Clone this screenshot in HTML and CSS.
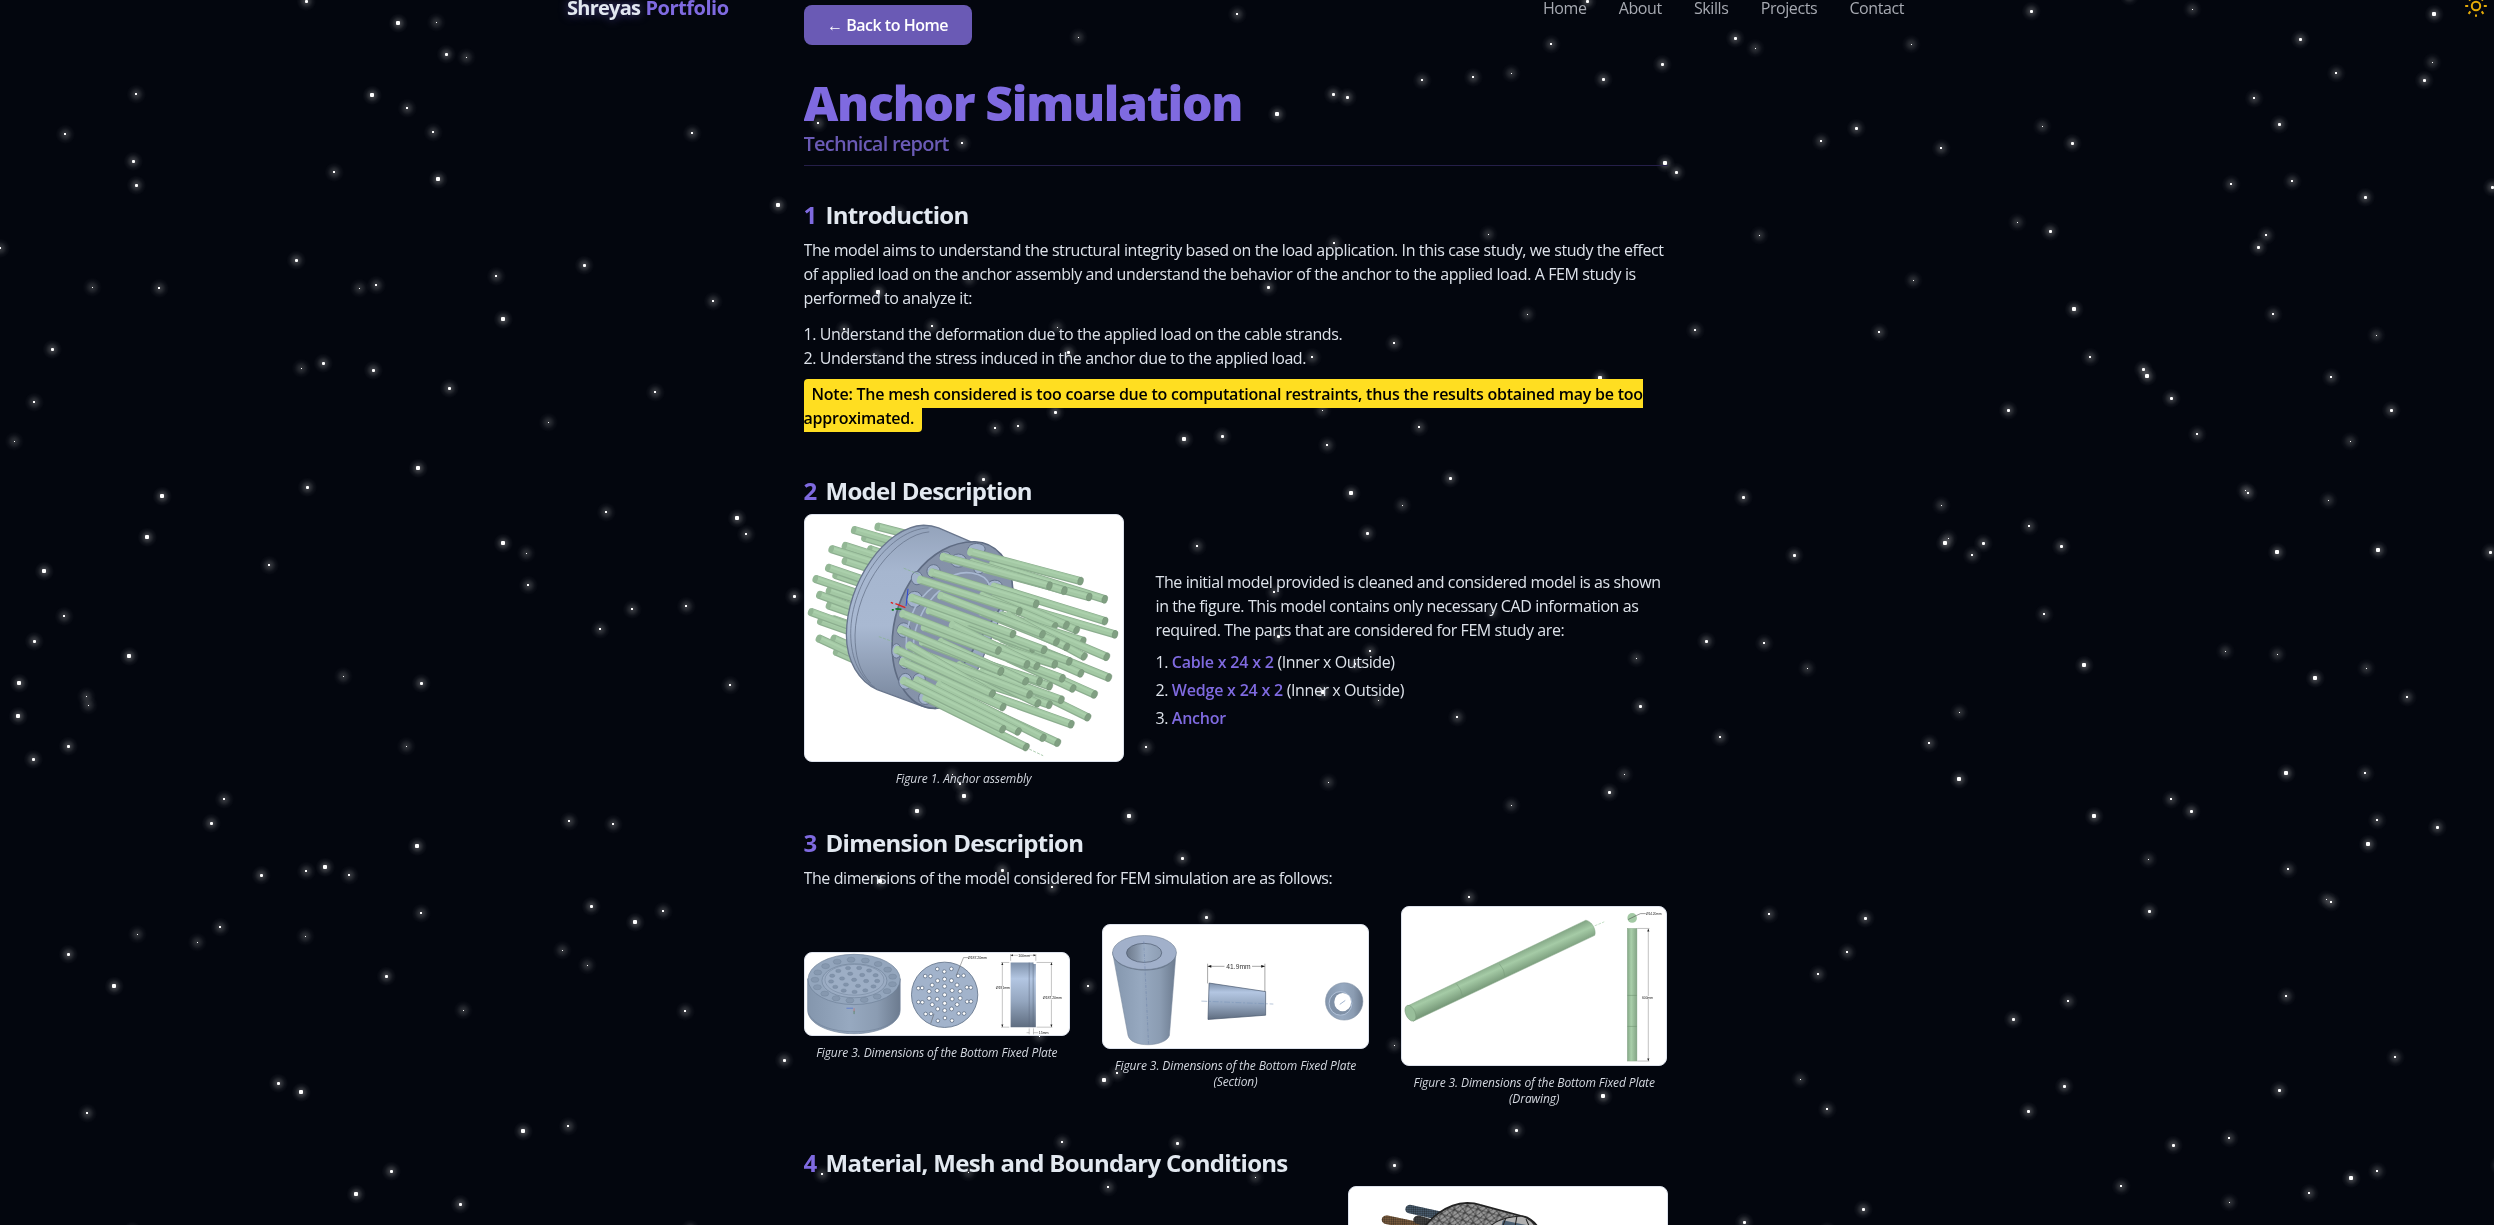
FILE: index.html
```html
<!DOCTYPE html>
<html lang="en">
<head>
<meta charset="utf-8">
<title>Anchor Simulation | Shreyas Portfolio</title>
<link rel="stylesheet" href="styles.css">
</head>
<body>
<svg class="stars" id="stars" aria-hidden="true">
  <defs>
    <radialGradient id="glow">
      <stop offset="0" stop-color="#fff" stop-opacity=".3"/>
      <stop offset=".3" stop-color="#fff" stop-opacity=".2"/>
      <stop offset=".65" stop-color="#fff" stop-opacity=".06"/>
      <stop offset="1" stop-color="#fff" stop-opacity="0"/>
    </radialGradient>
  </defs>
</svg>

<header class="site-header">
  <div class="header-inner">
    <a class="logo"><span class="logo-first">Shreyas</span> <span class="logo-last">Portfolio</span></a>
    <nav class="nav"><a>Home</a><a>About</a><a>Skills</a><a>Projects</a><a>Contact</a></nav>
  </div>
  <svg class="sun" viewBox="0 0 24 24"><circle cx="12" cy="12" r="4.2"/><path d="M12 1.2v2.4M12 20.4v2.4M1.2 12h3M19.8 12h3M4.6 4.6l1.7 2M17.7 17.4l1.7 2.4M4.6 19.8l1.7-2.4M19.4 4.6l-1.7 2"/></svg>
</header>

<main class="report">
  <a class="back">← Back to Home</a>
  <div class="title-block">
    <h1>Anchor Simulation</h1>
    <p class="subtitle">Technical report</p>
  </div>

  <section>
    <h2><span>1</span>Introduction</h2>
    <p>The model aims to understand the structural integrity based on the load application. In this case study, we study the effect<br>of applied load on the anchor assembly and understand the behavior of the anchor to the applied load. A FEM study is<br>performed to analyze it:</p>
    <p class="steps">1. Understand the deformation due to the applied load on the cable strands.<br>2. Understand the stress induced in the anchor due to the applied load.</p>
    <p class="note"><mark>Note: The mesh considered is too coarse due to computational restraints, thus the results obtained may be too<br>approximated.</mark></p>
  </section>

  <section class="model">
    <h2><span>2</span>Model Description</h2>
    <div class="split">
      <figure class="fig-main">
        <svg class="pic assembly" viewBox="27 27 960 744" preserveAspectRatio="none">
          <defs>
            <linearGradient id="ringOuter" x1="0" y1="0" x2="0" y2="1"><stop offset="0" stop-color="#94a3bb"/><stop offset=".25" stop-color="#a6b6cf"/><stop offset=".55" stop-color="#a9b9d2"/><stop offset="1" stop-color="#76849a"/></linearGradient>
            <linearGradient id="ringInner" x1="0" y1="0" x2="1" y2="1"><stop offset="0" stop-color="#8490a7"/><stop offset="1" stop-color="#8795ac"/></linearGradient>
          </defs>
          <g id="rodsBack"></g>
          <path d="M385 58C270 62 152 230 152 390C152 470 190 530 245 555L380 605C430 622 470 610 520 560L654 250C650 200 610 145 560 122L430 66Q410 58 385 58Z" fill="url(#ringOuter)" stroke="#68758c" stroke-width="4"/>
          <path d="M400 66C285 70 165 230 165 385C165 465 195 520 238 548M402 78C300 86 180 240 178 390C178 450 190 500 225 535" fill="none" stroke="#6b788f" stroke-width="2.5"/>
          <path d="M540 108C400 106 288 260 290 425C291 540 350 612 420 612L654 250C652 160 600 110 540 108Z" fill="url(#ringInner)" stroke="#5f6c83" stroke-width="5"/>
          <g fill="#a3b3cc" stroke="#65728a" stroke-width="3">
            <ellipse cx="545" cy="130" rx="26" ry="17"/><ellipse cx="490" cy="165" rx="24" ry="20"/><ellipse cx="450" cy="150" rx="16" ry="12"/><ellipse cx="415" cy="197" rx="20" ry="20"/><ellipse cx="365" cy="218" rx="17" ry="20"/><ellipse cx="358" cy="282" rx="24" ry="24"/><ellipse cx="325" cy="375" rx="20" ry="22"/><ellipse cx="303" cy="438" rx="14" ry="22"/><ellipse cx="330" cy="470" rx="19" ry="22"/><ellipse cx="330" cy="530" rx="20" ry="24"/><ellipse cx="390" cy="580" rx="20" ry="20"/><ellipse cx="372" cy="522" rx="18" ry="16"/><ellipse cx="600" cy="240" rx="22" ry="16"/><ellipse cx="552" cy="190" rx="15" ry="15"/>
          </g>
          <path d="M420 240C350 290 322 370 336 460M440 250C380 300 345 380 356 455M450 225C500 185 570 200 585 240" fill="none" stroke="#a9b9d2" stroke-width="5"/>
          <g id="rodsFront"></g>
          <path d="M325 188l45 18M250 395l40 14M704 735l42 20" stroke="#85b58a" stroke-width="2" stroke-dasharray="9 4"/>
          <path d="M330 307l-30-12M286 291l7 3" stroke="#e02020" stroke-width="4"/><path d="M338 250l-6 52" stroke="#2946d8" stroke-width="3"/><path d="M289 314h6M300 311l18 1" stroke="#0c7d22" stroke-width="5"/>
        </svg>
        <figcaption>Figure 1. Anchor assembly</figcaption>
      </figure>
      <div class="split-text">
        <p>The initial model provided is cleaned and considered model is as shown<br>in the figure. This model contains only necessary CAD information as<br>required. The parts that are considered for FEM study are:</p>
        <ul>
          <li>1. <b>Cable x 24 x 2</b> (Inner x Outside)</li>
          <li>2. <b>Wedge x 24 x 2</b> (Inner x Outside)</li>
          <li>3. <b>Anchor</b></li>
        </ul>
      </div>
    </div>
  </section>

  <section class="dims">
    <h2><span>3</span>Dimension Description</h2>
    <p>The dimensions of the model considered for FEM simulation are as follows:</p>
    <div class="trio">
      <figure>
        <svg class="pic plate" viewBox="12 21 798 251" preserveAspectRatio="none">
          <defs>
            <linearGradient id="steelH"><stop offset="0" stop-color="#8496ad"/><stop offset=".45" stop-color="#97a9c0"/><stop offset=".75" stop-color="#8b9cb2"/><stop offset="1" stop-color="#6c7b8f"/></linearGradient>
            <linearGradient id="steelV" x1="0" y1="0" x2="0" y2="1"><stop offset="0" stop-color="#7f91aa"/><stop offset=".25" stop-color="#b3c6e2"/><stop offset=".6" stop-color="#94a6bf"/><stop offset="1" stop-color="#5f6d80"/></linearGradient>
            <linearGradient id="bore"><stop offset="0" stop-color="#6d7a8c"/><stop offset=".3" stop-color="#8796aa"/><stop offset=".5" stop-color="#9eafc6"/><stop offset="1" stop-color="#8d9db3"/></linearGradient>
          </defs>
          <path d="M20 100V195C20 240 90 268 160 268S299 240 299 195V100Z" fill="url(#steelH)" stroke="#74859b" stroke-width="2"/>
          <path d="M22 205C40 245 100 262 160 262S280 245 297 205" fill="none" stroke="#72839a" stroke-width="2"/>
          <ellipse cx="160" cy="102" rx="139" ry="77" fill="#94a6bd" stroke="#6e8097" stroke-width="2"/>
          <g id="drumNotches" fill="#8698af"></g>
          <ellipse cx="161" cy="106" rx="98" ry="52" fill="#9bacc3" stroke="#71839a" stroke-width="2"/>
          <ellipse cx="161" cy="103" rx="89" ry="47" fill="#9daec5" stroke="#71839a" stroke-width="1.5"/>
          <g id="drumHoles" fill="#8193ab"></g>
          <path d="M137 190h20" stroke="#4968cf" stroke-width="2"/><path d="M160 190v10" stroke="#c66" stroke-width="2"/><path d="M160 198v10" stroke="#487a50" stroke-width="2"/>
          <circle cx="433" cy="149" r="100" fill="#a2b3cb" stroke="#5f7087" stroke-width="2.5"/>
          <g id="discHoles" fill="#fff"></g>
          <path d="M468 90L490 35H503M391 237l10-30" fill="none" stroke="#555" stroke-width="1.5"/>
          <path d="M632 50H700V55H708V248H632Z" fill="url(#steelV)"/><path d="M700 50v198M688 50v198" stroke="#5b6b80" stroke-width="1.5"/>
          <path d="M632 45V24M708 45V24M632 28h76M628 50h-25M628 248h-25M607 50v198M710 50h48M710 248h48M755 50v198M688 252v18M701 252v18M680 265h8M701 265h14" fill="none" stroke="#777" stroke-width="1.3"/>
          <path fill="#222" d="M632 28l7-3v6zM708 28l-7-3v6zM607 50l-3 8h6zM607 248l-3-8h6zM755 50l-3 8h6zM755 248l-3-8h6z"/>
          <path d="M654 24h34v9h-34zM586 122h44v9h-44zM730 154h52v9h-52z" fill="#fff"/>
          <g class="dim-tiny"><text x="655" y="32">100mm</text><text x="587" y="131">Ø191mm</text><text x="729" y="163">Ø187.20mm</text><text x="503" y="39">Ø187.20mm</text><text x="717" y="269">15mm</text></g>
        </svg>
        <figcaption>Figure 3. Dimensions of the Bottom Fixed Plate</figcaption>
      </figure>
      <figure>
        <svg class="pic wedge" viewBox="20 72 721 375" preserveAspectRatio="none">
          <path d="M46 155L88 408C92 428 116 437 143 437S198 425 201 408L219 155Z" fill="url(#steelH)" stroke="#78889d" stroke-width="1.5"/>
          <path d="M46 160C50 192 90 211 133 211S216 195 219 155Z" fill="#6d7c91"/>
          <ellipse cx="133" cy="156" rx="87" ry="52" fill="#a1b0ca" stroke="#68778c" stroke-width="1.5"/>
          <ellipse cx="132" cy="157" rx="48" ry="29" fill="url(#bore)" stroke="#4e5c70" stroke-width="2"/>
          <path d="M131 122L144 434" stroke="#6c82a8" stroke-width="1.5" stroke-dasharray="9 4 2 4"/>
          <path d="M309 249L463 275V347L306 360Z" fill="url(#steelV)" stroke="#4b5a70" stroke-width="2"/>
          <path d="M305 190v60M461 190v85M305 198h46M426 198h35" stroke="#555" stroke-width="1.5"/><path d="M305 198l10-4v8zM461 198l-10-4v8z" fill="#111"/>
          <path d="M288 304L484 313" stroke="#7892b8" stroke-width="1.5" stroke-dasharray="16 5 5 5"/>
          <text x="356" y="205" class="dim" textLength="66" lengthAdjust="spacingAndGlyphs">41.9mm</text>
          <ellipse cx="677" cy="305" rx="51" ry="57" fill="url(#steelH)" stroke="#8190a5" stroke-width="1.5"/>
          <ellipse cx="667" cy="311" rx="31" ry="36" fill="#7f90a6" stroke="#b7c8df" stroke-width="2.5"/>
          <ellipse cx="673" cy="307" rx="23" ry="28" fill="#fff"/><path d="M665 314l15-12" stroke="#7892b8" stroke-width="2"/>
        </svg>
        <figcaption>Figure 3. Dimensions of the Bottom Fixed Plate (Section)</figcaption>
      </figure>
      <figure>
        <svg class="pic cable" viewBox="827 18 721 479" preserveAspectRatio="none">
          <defs>
            <linearGradient id="greenRod" gradientUnits="userSpaceOnUse" x1="1080" y1="185" x2="1105" y2="235"><stop offset="0" stop-color="#85a887"/><stop offset=".4" stop-color="#a5cba6"/><stop offset="1" stop-color="#799b7b"/></linearGradient>
            <linearGradient id="greenBar"><stop offset="0" stop-color="#85a887"/><stop offset=".4" stop-color="#a9cfaa"/><stop offset="1" stop-color="#84a586"/></linearGradient>
          </defs>
          <path d="M842 318L1328 58C1345 62 1357 88 1352 104L858 364Z" fill="url(#greenRod)" stroke="#83a685" stroke-width="1.5"/>
          <ellipse cx="850" cy="340" rx="13" ry="25" transform="rotate(-20 850 340)" fill="#98be9a" stroke="#78997a" stroke-width="1.5"/>
          <path d="M975 250q15 18 17 40M1092 190q15 18 15 38" fill="none" stroke="#759879" stroke-width="1.5"/>
          <path d="M1352 75l26-12" stroke="#8ec392" stroke-width="1.5" stroke-dasharray="8 3"/>
          <ellipse cx="1454" cy="51" rx="13" ry="15" fill="#a3c9a4"/><path d="M1443 56l22-12 12-6h14" fill="none" stroke="#444" stroke-width="1.5"/>
          <rect x="1441" y="83" width="26" height="402" fill="url(#greenBar)" stroke="#7c9c7e" stroke-width="1.2"/><path d="M1441 286h26M1441 380h26" stroke="#6e9071" stroke-width="1.5"/>
          <path d="M1468 83h33M1468 485h33M1498 84v401" stroke="#777" stroke-width="1.3"/><path d="M1498 84l-3 8h6zM1498 485l-3-8h6z" fill="#222"/>
          <path d="M1480 288h32v9h-32z" fill="#fff"/>
          <g class="dim-tiny"><text x="1492" y="41" textLength="42" lengthAdjust="spacingAndGlyphs">Ø14.20mm</text><text x="1481" y="296" textLength="30" lengthAdjust="spacingAndGlyphs">600mm</text></g>
        </svg>
        <figcaption>Figure 3. Dimensions of the Bottom Fixed Plate (Drawing)</figcaption>
      </figure>
    </div>
  </section>

  <section class="mesh-section">
    <h2><span>4</span>Material, Mesh and Boundary Conditions</h2>
    <figure class="fig-mesh">
      <svg class="pic mesh" viewBox="684 858 864 744" preserveAspectRatio="none">
        <defs><pattern id="wire" width="30" height="22" patternUnits="userSpaceOnUse" patternTransform="rotate(18)"><path d="M0 0L30 22M0 22L17 0M0 11H30M30 0L17 22M8 0V22" stroke="#222" stroke-width="1.8"/></pattern>
        <pattern id="grid" width="6" height="6" patternUnits="userSpaceOnUse"><path d="M0 0H6M0 0V6" stroke="#111" stroke-width="1.6"/></pattern></defs>
        <g stroke-width="26" stroke-linecap="round"><path d="M850 925L980 957" stroke="#4b5f72"/><path d="M786 957L950 995" stroke="#806040"/><path d="M872 957l60 20" stroke="#444"/><g stroke="url(#grid)"><path d="M850 925L980 957M786 957L950 995M872 957l60 20"/></g></g>
        <path d="M1005 906C950 908 900 950 870 1010L860 1100H1240C1220 1000 1190 950 1150 945L1040 912Q1025 906 1005 906Z" fill="#979797"/>
        <path d="M1005 906C950 908 900 950 870 1010L860 1100H1240C1220 1000 1190 950 1150 945L1040 912Q1025 906 1005 906Z" fill="url(#wire)" stroke="#222" stroke-width="5"/>
        <path d="M1150 946C1100 950 1070 965 1050 1000L1200 1000Q1185 952 1150 946Z" fill="#b0b0b0" stroke="#222" stroke-width="3"/><path d="M1100 968l120 28" stroke="#4b5f72" stroke-width="20"/><path d="M1110 952l-10 30M1140 948l-5 30M1165 955l10 25" stroke="#222" stroke-width="3"/>
      </svg>
    </figure>
  </section>
</main>
<script src="scene.js"></script>
</body>
</html>
```
FILE: styles.css
```css
* { box-sizing: border-box; margin: 0; padding: 0; }
html, body { height: 100%; }
body {
  overflow: hidden;
  background: #03060e;
  color: #dde2ea;
  font: 450 16px/24px "Open Sans", "Noto Sans", sans-serif;
  letter-spacing: -0.405px;
  padding-right: 23px;
}
.stars { position: fixed; inset: 0; width: 100%; height: 100%; z-index: -1; }

.site-header { position: fixed; top: -12px; left: 0; right: 0; height: 40px; display: flex; align-items: center; z-index: 5; }
.header-inner { width: 1337px; margin-left: 567px; display: flex; justify-content: space-between; align-items: center; }
.logo { font-size: 20px; line-height: 28px; font-weight: 700; white-space: nowrap; }
.logo-first { color: #e2e8f0; letter-spacing: -0.75px; text-shadow: 0 0 10px rgba(127, 106, 224, .6); }
.logo-last { color: #7f6ae0; letter-spacing: -0.48px; margin-left: .5px; }
.nav { display: flex; gap: 32.3px; color: #a6a9b1; letter-spacing: -0.42px; }
.sun { width: 24px; height: 24px; margin: -5px 6px 0 auto; fill: none; stroke: #e5ab08; stroke-width: 2; }

.report { width: 864px; height: 1225px; overflow: hidden; margin: 0 auto; padding-top: 5px; }
.back {
  display: flex; align-items: center; justify-content: center;
  width: 168px; height: 40px; border-radius: 8px;
  background: #6a5ab5; color: #fff; font-weight: 650; letter-spacing: -0.48px;
}
.title-block { padding: 34px 0 0; border-bottom: 1px solid #251f49; height: 121px; }
h1 { font-size: 48px; line-height: 48px; font-weight: 800; letter-spacing: -1.25px; color: #7f6ae0; }
.subtitle { font-size: 20px; line-height: 28px; font-weight: 550; letter-spacing: -.76px; color: #6a5ab5; margin-top: 3px; }
section { padding-top: 33px; }
h2 { display: flex; gap: 9px; font-size: 24px; line-height: 32px; font-weight: 700; letter-spacing: -0.71px; color: #e2e8f0; }
h2 span { color: #7f6ae0; }
section > p { margin-top: 7px; white-space: nowrap; }
section > .steps { margin-top: 12px; }
section > .note { margin-top: 12px; }
mark { background: #ffde21; color: #000; font-weight: 650; letter-spacing: -0.23px; padding: 4px 8px 3px; border-radius: 4px; }

.model { padding-top: 45px; }
.split { display: flex; align-items: center; gap: 32px; margin-top: 7px; }
.split-text { white-space: nowrap; padding-bottom: 1px; }
.split-text ul { list-style: none; margin-top: 8px; display: grid; gap: 4px; }
.split-text b { font-weight: 550; letter-spacing: -0.21px; color: #7f6ae0; }
.pic { display: block; width: 100%; background: #fff; border: 1px solid #dde2ec; border-radius: 8px; }
.fig-main { width: 320px; }
.assembly { height: 248px; }
figcaption { margin-top: 9px; text-align: center; font-size: 12px; line-height: 16px; font-style: italic; letter-spacing: -0.1px; color: #d3d7df; }

.dims { padding-top: 40px; }
.trio { display: grid; grid-template-columns: repeat(3, 1fr); gap: 32px; align-items: center; margin-top: 16px; }
.plate { height: 84px; }
.wedge { height: 125px; }
.cable { height: 160px; }
.dim { font: 20px "Liberation Sans", sans-serif; letter-spacing: 0; fill: #333; }
.dim-tiny { font: 11px "Liberation Sans", sans-serif; letter-spacing: -0.3px; fill: #222; }

.mesh-section { padding-top: 40px; }
.fig-mesh { width: 320px; margin: 7px 0 0 auto; }
.mesh { height: 248px; }
```
FILE: scene.js
```js
const NS = 'http://www.w3.org/2000/svg';
function add(parent, tag, attrs) {
  const el = document.createElementNS(NS, tag);
  for (const k in attrs) el.setAttribute(k, attrs[k]);
  parent.appendChild(el);
}

// Background stars: x,y,size
const STARS = `306,1,3 398,23,4 436,22,1 446,54,3 466,57,1 136,94,2 65,134,2 372,95,4 407,108,2 433,132,2 692,133,2 133,161,3 136,185,3 334,172,2 438,179,4 778,205,4 0,248,2 296,260,3 92,287,1 159,288,2 359,288,1 376,285,2 496,276,2 584,265,3 503,319,4 713,301,2 52,349,3 301,368,1 323,363,3 373,370,3 449,388,3 655,392,2 34,402,2 14,441,1 548,422,1 418,468,4 307,487,3 162,496,4 147,537,4 269,565,2 44,571,4 503,543,4 526,553,1 528,585,2 606,512,2 737,518,4 746,534,2 632,609,2 686,606,2 794,596,3
64,616,2 34,641,3 129,656,4 19,683,4 86,696,1 88,705,1 18,716,4 68,746,3 33,759,3 343,676,1 421,683,3 600,629,2 730,685,2 406,746,1 224,799,2 211,823,3 417,846,4 569,821,2 613,824,2 261,875,3 306,871,2 325,867,4 349,875,2 137,934,1 197,942,1 220,927,2 305,936,1 421,913,2 591,906,3 663,911,2 635,922,4 562,950,1 587,965,1 68,954,3 114,986,4 386,976,3 463,1010,1 685,1011,2 784,1060,3 278,1083,3 301,1092,4 87,1113,2 523,1131,4 568,1126,2 391,1171,3 356,1194,4 460,1204,3 690,1229,2 132,1231,2
2044,614,2 1706,641,3 1764,643,2 1807,668,1 2084,665,4 2225,651,1 2277,654,1 2366,668,1 2315,678,4 2407,697,2 1959,712,1 1720,737,2 1929,743,2 1959,779,4 2286,773,4 2365,773,2 2171,799,2 2191,811,3 2094,816,4 2377,820,2 2437,827,3 2368,844,4 2148,859,1 2288,869,2 2326,899,1 2331,902,2 2149,911,3 1769,914,2 1865,918,3 1847,952,2 1818,974,2 2068,1001,2 2013,1019,3 2286,996,2 2395,1057,2 1800,1079,1 1827,1109,2 2064,1086,3 2028,1111,3 2279,1090,3 2229,1138,2 2173,1145,3 2377,1171,2 2351,1178,4 2121,1186,2 2309,1193,2 2229,1202,1 1863,1209,3 1744,1222,3 1827,1231,2 2499,1165,2
2171,398,3 2008,410,3 2391,410,3 2197,434,2 2350,441,1 1743,497,3 1941,505,1 2245,490,1 2248,493,2 2328,500,1 2029,526,2 1948,538,1 1945,543,4 1983,543,3 1972,555,2 2061,546,3 1794,555,3 2277,552,4 2378,550,4 2490,552,3
1587,1,3 2031,11,3 2129,-4,2 2192,9,1 2434,14,4 1551,44,2 1735,38,3 1755,48,1 1911,44,1 2300,39,3 1511,73,1 1603,79,3 1662,64,3 2432,62,1 2424,80,3 2336,73,2 2254,98,2 2279,124,3 2042,126,1 2072,143,3 1856,128,3 1821,141,2 1941,148,2 1665,163,4 1676,172,3 2231,184,2 2292,181,2 2492,187,3 2365,197,3 2017,222,1 2050,231,3 2266,235,2 2258,247,3 1759,235,1 1913,280,1 2074,309,4 2273,314,2 1527,314,1 1695,330,2 1879,332,2 2376,335,1 2090,357,2 2143,369,3 2147,376,4 2331,377,2 1600,378,4
1237,14,2 1078,37,1 1277,114,4 818,123,2 962,143,2 899,212,1 1333,94,3 1347,97,3 1422,80,2 1473,77,2
1334,243,2 1488,234,1 969,279,1 878,292,4 1268,287,3 844,329,2 932,326,2 1057,327,1 1394,343,2 876,355,1 1068,352,3 1312,357,2 1055,412,3 995,428,2 1018,426,2 1184,439,4 1222,436,3 1419,427,2 1327,445,2 1322,410,1
983,479,3 1351,493,4 1450,478,3 1402,505,1 1367,533,3 1197,546,2 1274,592,2 1278,636,3 1370,651,2 1355,664,2 1323,692,4 1378,700,1 1636,658,1 1492,612,1 1640,706,3 1457,717,2 1146,747,2 1328,782,1 1624,774,1 1609,792,3 952,774,1 960,784,2 964,796,4
917,811,4 1129,816,4 1511,805,1 1182,858,3 1002,870,3 880,881,4 1052,887,2 1206,917,3 1469,897,2 1088,986,2 1394,1045,1 1104,1080,4 1117,1073,2 1603,1096,4 1516,1130,3 1062,1142,2 1177,1143,3 1394,1165,3 822,1174,2 968,1172,1 1255,1177,1 1108,1187,2 1039,1036,1`;
const sky = document.getElementById('stars');
for (const item of STARS.split(/\s+/)) {
  const [x, y, s] = item.split(',').map(Number);
  const half = Math.floor(s / 2);
  add(sky, 'circle', { cx: x + .3, cy: y + .3, r: 10, fill: 'url(#glow)', opacity: .5 + s * .13 });
  add(sky, 'rect', { x: x - half, y: y - half, width: s, height: s, rx: s > 2 ? 1 : 0, fill: '#fff' });
}

// Cable strands: x1,y1,x2,y2, the visible cut face is at x2,y2
function rods(id, list, face) {
  const g = document.getElementById(id);
  for (const [x1, y1, x2, y2] of list) {
    const seg = (w, c, dy) => add(g, 'line', { x1, y1: y1 + dy, x2, y2: y2 + dy, stroke: c, 'stroke-width': w });
    seg(25, '#8cae8f', 0);
    seg(19, '#a3c8a4', -1);
    seg(6, '#abd0ac', -4);
    const a = Math.atan2(y2 - y1, x2 - x1) * 180 / Math.PI;
    add(g, 'ellipse', { cx: x1, cy: y1, rx: 8, ry: 12, fill: face ? '#a5caa6' : '#93b795', transform: `rotate(${a} ${x1} ${y1})` });
    if (face) add(g, 'ellipse', { cx: x2, cy: y2, rx: 8.5, ry: 12.5, fill: '#809f82', stroke: '#6d8b70', transform: `rotate(${a} ${x2} ${y2})` });
  }
}
rods('rodsBack', [[245,62,330,84],[205,95,290,120],[174,72,290,106],[222,130,260,143],[146,165,240,195],[146,120,240,150],[106,130,225,168],[118,208,200,235],[96,186,200,222],[98,255,180,282],[58,220,180,262],[98,300,170,325],[69,268,170,305],[112,342,165,360],[72,347,160,378],[44,320,160,362],[120,440,180,466],[112,400,175,428],[68,400,175,450]], false);
rods('rodsFront', [[590,175,932,282],[525,138,859,227],[570,190,885,275],[595,243,933,348],[530,170,810,256],[442,153,765,241],
[660,300,963,388],[640,290,847,375],[600,270,816,360],[560,270,781,364],[408,200,725,296],[620,330,867,408],[373,222,674,318],
[690,350,938,456],[640,330,870,455],[600,330,817,426],[560,320,786,411],[435,270,744,388],[700,420,944,519],[620,400,860,506],[600,390,825,470],[400,315,715,431],[520,350,749,435],[348,277,655,387],
[700,480,901,570],[640,460,836,552],[560,430,804,521],[560,410,781,479],[470,358,727,484],[385,365,697,479],[320,325,611,437],
[640,520,881,639],[560,500,801,586],[580,480,766,545],[520,460,735,530],[435,410,693,530],[380,410,618,500],[314,373,618,500],[580,570,831,660],[520,520,765,601],[490,480,730,597],[396,452,705,570],[340,420,592,568],[303,434,592,568],
[320,470,625,608],[500,580,790,716],[430,540,746,701],[362,526,671,682],[390,578,695,729],[323,527,624,675]], true);

// Perforations, laid out in concentric rings
function holes(id, cx, cy, rings, ky, draw) {
  const g = document.getElementById(id);
  for (const [n, r, size, phase] of rings)
    for (let i = 0; i < n; i++) {
      const t = (i / n) * Math.PI * 2 + phase;
      draw(g, cx + r * Math.cos(t), cy + r * ky * Math.sin(t), size);
    }
}
const pit = (g, x, y, s) => add(g, 'ellipse', { cx: x, cy: y, rx: s, ry: s * .65, stroke: '#6b7d95' });
holes('drumNotches', 160, 104, [[17, 118, 12, .2]], .53, pit);
holes('drumHoles', 160, 103, [[1,0,8,0],[6,37,8,.2],[13,70,8,.1]], .53, pit);
holes('discHoles', 433, 149, [[1,0,6,0],[6,26,6,.52],[14,48,6,.22],[10,71,5.5,.3],[12,82,5.5,.25]], 1, (g, x, y, s) =>
  add(g, 'circle', { cx: x, cy: y, r: s, stroke: '#4d5d74', 'stroke-width': 2 }));
```
